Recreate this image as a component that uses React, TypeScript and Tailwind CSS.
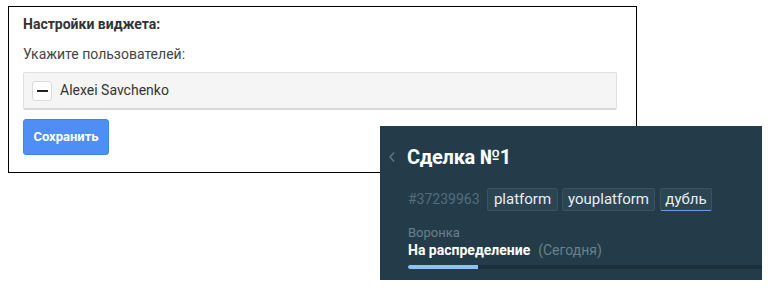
import React from "react";

export default function App() {
  return (
    <div
      className="relative w-[768px] h-[290px] bg-white overflow-hidden"
      style={{ fontFamily: "Roboto, 'Noto Sans', sans-serif" }}
    >
      <div className="ml-[8px] pt-[6px]">
        <div className="w-[629px] h-[167px] border border-black px-[14px] pt-[7px]">
          <div className="text-[14px] leading-[20px] font-bold text-[#333]">
            Настройки виджета:
          </div>
          <div className="mt-[10px] text-[14px] leading-[20px] text-[#444]">
            Укажите пользователей:
          </div>
          <div className="mt-[8px] w-[594px] h-[38px] flex items-center gap-[8px] bg-[#f5f5f5] border border-[#e1e1e1] border-b-2 border-b-[#d8d8d8] rounded-[2px] pl-[8px]">
            <div className="w-[20px] h-[20px] bg-white border border-[#dcdcdc] rounded-[3px] flex items-center justify-center">
              <div className="w-[11px] h-[2px] bg-[#222]" />
            </div>
            <span className="text-[14px] text-[#333]">Alexei Savchenko</span>
          </div>
          <button className="mt-[9px] h-[36px] w-[86px] bg-[#4f8ef5] border border-[#4282ea] rounded-[3px] text-white text-[13px] font-bold flex items-center justify-center">
            Сохранить
          </button>
        </div>
      </div>

      <div className="absolute left-[380px] top-[126px] w-[382px] h-[154px] bg-[#243c4a]">
        <div className="flex items-center pl-[8px] mt-[19px] h-[24px]">
          <svg width="8" height="12" viewBox="0 0 8 12" className="shrink-0">
            <path d="M6 1.5 L2 6 L6 10.5" fill="none" stroke="#5f7380" strokeWidth="1.6" />
          </svg>
          <span className="ml-[11px] text-[20px] leading-[24px] font-bold text-white tracking-[-0.3px]">
            Сделка №1
          </span>
        </div>
        <div className="flex items-center pl-[28px] mt-[19px] h-[23px]">
          <span className="w-[73px] text-[14px] text-[#566d7b] mr-[6px]">#37239963</span>
          <span className="w-[71px] h-[23px] flex items-center justify-center bg-[#2c4553] border border-[#3a5361] rounded-[2px] text-[15px] text-[#e8eef1]">
            platform
          </span>
          <span className="ml-[4px] w-[93px] h-[23px] flex items-center justify-center bg-[#2c4553] border border-[#3a5361] rounded-[2px] text-[15px] text-[#e8eef1]">
            youplatform
          </span>
          <span className="ml-[5px] w-[52px] h-[23px] flex items-center justify-center bg-[#2c4553] border border-[#3a5361] border-b-[#6b9fd8] rounded-[2px] text-[15px] text-[#e8eef1]">
            дубль
          </span>
        </div>
        <div className="pl-[28px] mt-[14px] text-[13px] leading-[16px] text-[#6a808d]">Воронка</div>
        <div className="pl-[28px] flex items-baseline text-[14px] leading-[18px]">
          <span className="font-bold text-white">На распределение</span>
          <span className="ml-[8px] text-[#6a808d]">(Сегодня)</span>
        </div>
        <div className="ml-[28px] mt-[6px] h-[4px] bg-[#1b2f3a] flex">
          <div className="w-[70px] h-[4px] bg-[#8cc2f4] rounded-l-[2px]" />
        </div>
      </div>
    </div>
  );
}
